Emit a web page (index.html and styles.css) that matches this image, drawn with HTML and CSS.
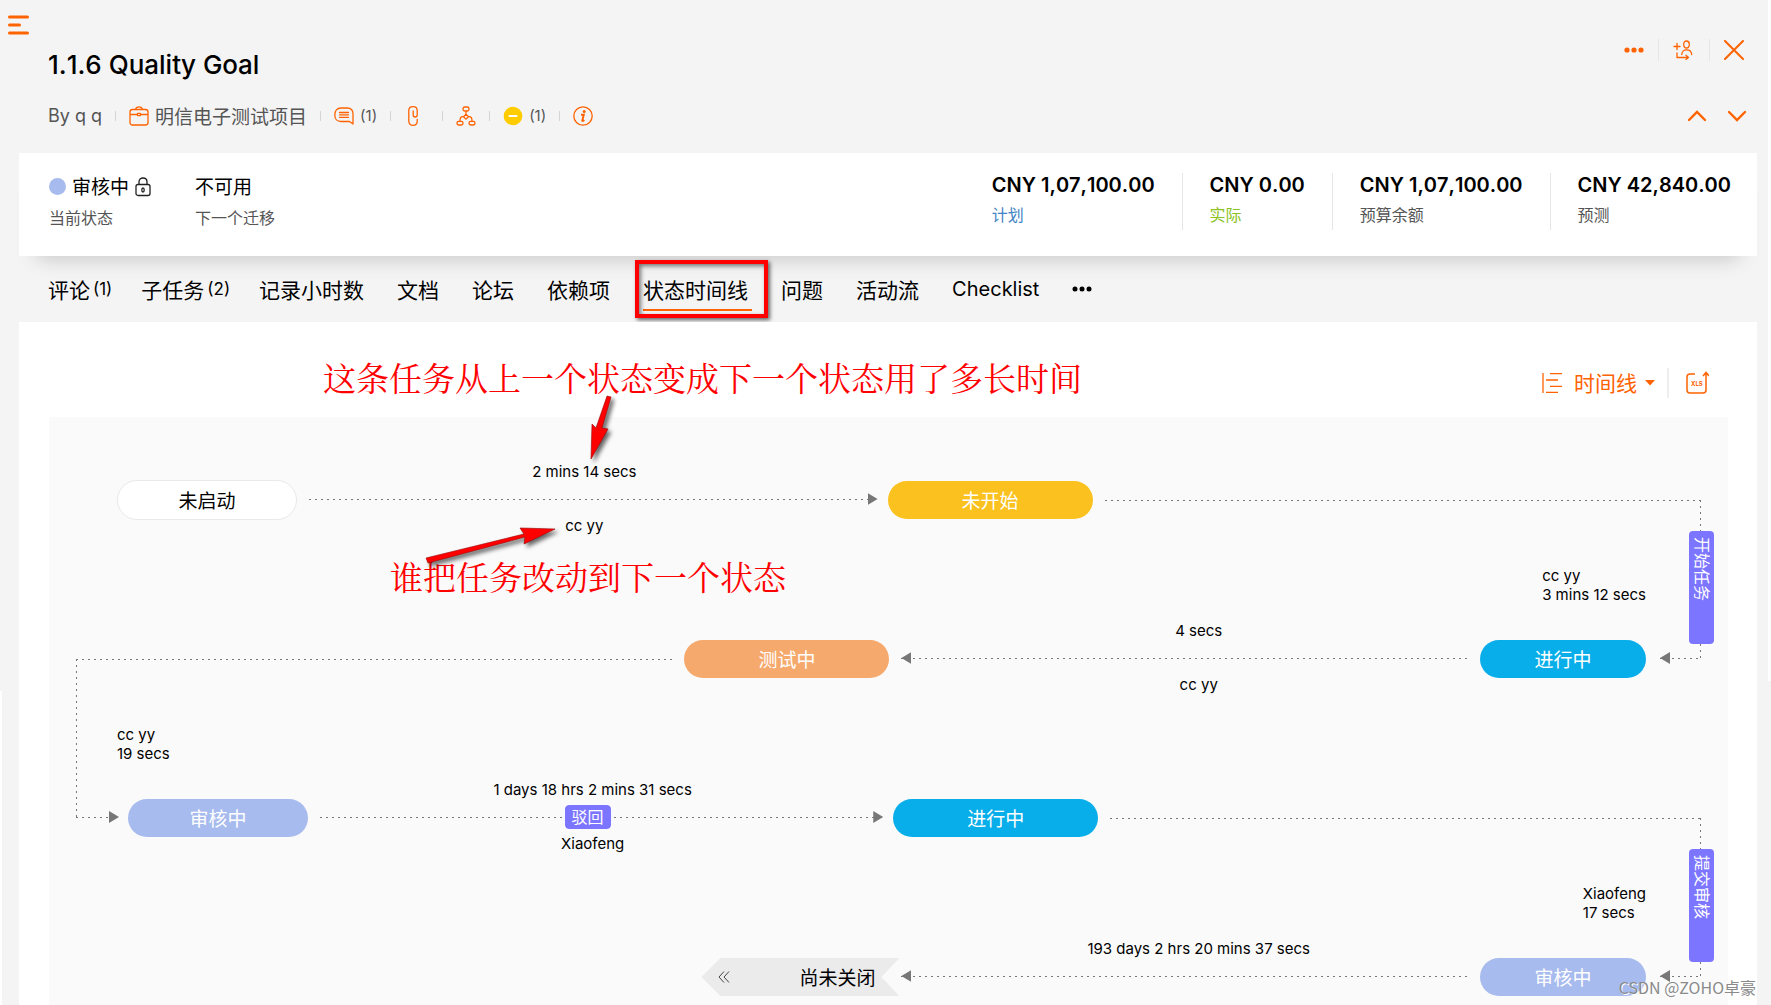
FILE: index.html
```html
<!DOCTYPE html>
<html lang="zh-CN">
<head>
<meta charset="utf-8">
<title>1.1.6 Quality Goal</title>
<link rel="stylesheet" href="styles.css">
</head>
<body>
<div class="app">
  <button class="menu-btn" aria-label="菜单">
    <svg width="21" height="20" viewBox="0 0 21 20"><path d="M1.5 2H19.5M1.5 10H11.5M1.5 18H19.5" stroke="currentColor" stroke-width="3" stroke-linecap="round"/></svg>
  </button>

  <header class="head">
    <div class="head-main">
      <h1 class="title">1.1.6 Quality Goal</h1>
      <div class="meta">
        <span class="meta-by">By q q</span>
        <i class="sep"></i>
        <a class="meta-link project" href="#">
          <svg class="ico" width="20" height="20" viewBox="0 0 20 20" fill="none" stroke="currentColor" stroke-width="1.3"><rect x="1" y="3.5" width="18" height="15.5" rx="2.5"/><path d="M6.5 3.5C7 1.6 8 .8 10 .8s3 .8 3.500 2.700M1 8.500h7.500M11.500 8.500H19"/><rect x="8.500" y="7.300" width="3" height="2.400" rx=".5"/></svg>
          <span>明信电子测试项目</span>
        </a>
        <i class="sep"></i>
        <a class="meta-link" href="#">
          <svg class="ico" width="20" height="20" viewBox="0 0 20 20" fill="none" stroke="currentColor" stroke-width="1.300" stroke-linecap="round" stroke-linejoin="round"><path d="M7 2h6c4 0 6 2.500 6 6v10l-3.500-2.500H7c-4 0-6.200-3-6.200-6.500C.8 4.500 3 2 7 2z"/><path d="M5.500 6.500h9M5.500 8.900h9M5.500 11.300h9"/></svg>
          <span>(1)</span>
        </a>
        <i class="sep"></i>
        <a class="meta-link clip" href="#" aria-label="附件">
          <svg class="ico" width="10" height="20" viewBox="0 0 10 20" fill="none" stroke="currentColor" stroke-width="1.300" stroke-linecap="round"><path d="M9.200 13.500v2c0 2.300-1.700 3.800-4.200 3.800S.8 17.800.8 15.500V4.500C.8 2.200 2.500.7 5 .7s4.200 1.500 4.200 3.800V9c0 1.300-.8 2-2 2s-2-.7-2-2V5"/></svg>
        </a>
        <i class="sep"></i>
        <a class="meta-link" href="#" aria-label="依赖项">
          <svg class="ico" width="20" height="20" viewBox="0 0 20 20" fill="none" stroke="currentColor" stroke-width="1.300"><rect x="7" y="1" width="6" height="4" rx="1.800"/><path d="M10 5v3.200M10 8.200l2.500 2.500L10 13.200l-2.500-2.500zM7.500 10.700C4.500 10.500 4 12 4 15.500M12.500 10.700c3-.2 3.500 1.300 3.500 4.800"/><rect x="1" y="15.300" width="6" height="3.700" rx="1.800"/><rect x="13" y="15.300" width="6" height="3.700" rx="1.800"/></svg>
        </a>
        <i class="sep"></i>
        <a class="meta-link" href="#">
          <svg class="ico" width="20" height="20" viewBox="0 0 20 20"><circle cx="10" cy="10" r="9.300" fill="#fc0"/><path d="M6.500 10h7" stroke="#fff" stroke-width="2" stroke-linecap="round"/></svg>
          <span>(1)</span>
        </a>
        <i class="sep"></i>
        <a class="meta-link" href="#" aria-label="信息">
          <svg class="ico" width="20" height="20" viewBox="0 0 20 20"><circle cx="10" cy="10" r="9.200" fill="none" stroke="currentColor" stroke-width="1.300"/><circle cx="11.200" cy="5.500" r="1.500" fill="currentColor"/><path d="M8 8.800h2.800L9.300 14.500c-.2.900.6.700 2-.5" fill="none" stroke="currentColor" stroke-width="1.900"/></svg>
        </a>
      </div>
    </div>
    <div class="head-side">
      <div class="actions">
        <button aria-label="更多"><svg width="20" height="20" viewBox="0 0 20 20" fill="currentColor"><circle cx="3" cy="10" r="2.600"/><circle cx="10" cy="10" r="2.600"/><circle cx="17" cy="10" r="2.600"/></svg></button>
        <i class="sep tall"></i>
        <button class="follow" aria-label="添加关注者"><svg width="20" height="20" viewBox="0 0 20 20" fill="none" stroke="currentColor" stroke-width="1.300" stroke-linecap="round" stroke-linejoin="round"><path d="M1 6.500h6M4 3.500v6M13.500 1c1.700 0 2.800 1.300 2.800 3.200S15.200 8 13.500 8s-2.800-1.900-2.800-3.800S11.800 1 13.500 1zM8.800 14.500c0-2.800 2-4.700 4.700-4.700 2.900 0 5 1.700 5.200 4.700M4 13v4.500h11.500M13 15.200l2.500 2.300-2.500 2"/></svg></button>
        <i class="sep tall"></i>
        <button aria-label="关闭"><svg width="20" height="20" viewBox="0 0 20 20" fill="none" stroke="currentColor" stroke-width="2" stroke-linecap="round"><path d="M1 1l18 18M19 1L1 19"/></svg></button>
      </div>
      <div class="pager">
        <button aria-label="上一个"><svg width="20" height="12" viewBox="0 0 20 12" fill="none" stroke="currentColor" stroke-width="2.400" stroke-linecap="round"><path d="M2 10l8-8 8 8"/></svg></button>
        <button aria-label="下一个"><svg width="20" height="12" viewBox="0 0 20 12" fill="none" stroke="currentColor" stroke-width="2.400" stroke-linecap="round"><path d="M2 2l8 8 8-8"/></svg></button>
      </div>
    </div>
  </header>

  <section class="summary">
    <div class="state">
      <div class="state-item current">
        <div class="state-value"><i class="dot"></i><span>审核中</span>
          <svg width="16" height="20" viewBox="0 0 16 20" fill="none" stroke="#222" stroke-width="1.300"><rect x="1" y="7.500" width="14" height="11" rx="2"/><path d="M4 7.500V5c0-2.500 1.700-4 4-4s4 1.500 4 4v2.500"/><ellipse cx="8" cy="13" rx="1.200" ry="2"/></svg>
        </div>
        <div class="caption">当前状态</div>
      </div>
      <div class="state-item">
        <div class="state-value"><span>不可用</span></div>
        <div class="caption">下一个迁移</div>
      </div>
    </div>
    <div class="budget">
      <div class="budget-item"><div class="amount">CNY 1,07,100.00</div><div class="caption plan">计划</div></div>
      <div class="budget-item"><div class="amount">CNY 0.00</div><div class="caption actual">实际</div></div>
      <div class="budget-item"><div class="amount">CNY 1,07,100.00</div><div class="caption">预算余额</div></div>
      <div class="budget-item"><div class="amount">CNY 42,840.00</div><div class="caption">预测</div></div>
    </div>
  </section>

  <nav class="tabs">
    <button class="tab counted">评论<span class="count">(1)</span></button>
    <button class="tab counted">子任务<span class="count">(2)</span></button>
    <button class="tab">记录小时数</button>
    <button class="tab">文档</button>
    <button class="tab">论坛</button>
    <button class="tab">依赖项</button>
    <button class="tab active">状态时间线</button>
    <button class="tab">问题</button>
    <button class="tab">活动流</button>
    <button class="tab latin">Checklist</button>
    <button class="tab" aria-label="更多"><svg width="20" height="6" viewBox="0 0 20 6"><circle cx="3" cy="3" r="2.500"/><circle cx="10" cy="3" r="2.500"/><circle cx="17" cy="3" r="2.500"/></svg></button>
  </nav>

  <main class="panel">
    <div class="toolbar">
      <button class="view-btn">
        <svg width="20" height="20" viewBox="0 0 20 20" stroke="currentColor" stroke-width="1.300"><path d="M1 0v20M8 .7h12M4 7h12M8 13.300h12M4 19.300h12"/></svg>
        <span>时间线</span>
        <svg width="10" height="6" viewBox="0 0 10 6"><path d="M0 0h10L5 5.500z" fill="currentColor"/></svg>
      </button>
      <i class="sep bar"></i>
      <button class="xls-btn" aria-label="导出">
        <svg width="24" height="24" viewBox="0 0 24 24" fill="none" stroke="currentColor" stroke-width="1.500"><path d="M10 3H5C3.300 3 2 4 2 6v13c0 2 1 3 3 3h13c2 0 3-1 3-3V2M18 5l3-3.500L24 5"/><text x="6" y="15" class="xls">XLS</text></svg>
      </button>
    </div>

    <div class="canvas">
      <div class="row forward">
        <div class="node plain">未启动</div>
        <div class="link"><span>2 mins 14 secs</span><div class="line"></div><span>cc yy</span></div>
        <div class="node wide yellow">未开始</div>
        <div class="turn turn-right">
          <div class="drop"></div><div class="back"></div>
          <span class="vtag">开始任务</span>
          <p class="note">cc yy<br>3 mins 12 secs</p>
        </div>
      </div>

      <div class="row backward">
        <div class="turn turn-left">
          <div class="drop"></div><div class="back"></div>
          <p class="note">cc yy<br>19 secs</p>
        </div>
        <div class="node wide orange">测试中</div>
        <div class="link reverse"><span>4 secs</span><div class="line"></div><span>cc yy</span></div>
        <div class="node narrow blue">进行中</div>
      </div>

      <div class="row forward inset">
        <div class="node lilac">审核中</div>
        <div class="link"><span>1 days 18 hrs 2 mins 31 secs</span><div class="line"><b class="tag">驳回</b></div><span>Xiaofeng</span></div>
        <div class="node wide blue">进行中</div>
        <div class="turn turn-right">
          <div class="drop"></div><div class="back"></div>
          <span class="vtag">提交审核</span>
          <p class="note">Xiaofeng<br>17 secs</p>
        </div>
      </div>

      <div class="row backward">
        <div class="spacer"></div>
        <div class="open"><svg width="12" height="12" viewBox="0 0 12 12" fill="none" stroke="#444"><path d="M6 .5L1 6l5 5.500M11 .5L6 6l5 5.500"/></svg><span>尚未关闭</span></div>
        <div class="link reverse"><span>193 days 2 hrs 20 mins 37 secs</span><div class="line"></div><span></span></div>
        <div class="node narrow lilac">审核中</div>
      </div>
    </div>

    <p class="remark remark-time">这条任务从上一个状态变成下一个状态用了多长时间</p>
    <p class="remark remark-who">谁把任务改动到下一个状态</p>
    <svg class="pointers" width="220" height="190" viewBox="420 390 220 190">
      <g fill="#f00" stroke="#900" stroke-width=".6"><path d="M607 396l4 1-9 31 6 1-17 30 1-35 4 4z"/><path d="M426 558l98-24-4-6 35 1-31 15 1-7-97 26z"/></g>
    </svg>
  </main>
  <div class="watermark">CSDN @ZOHO卓豪</div>
  <i class="edge edge-left"></i><i class="edge edge-right"></i>
</div>
</body>
</html>
```
FILE: styles.css
```css
* { box-sizing: border-box; }

body {
  margin: 0;
  background: #f4f4f4;
  color: #000;
  font: 400 15px/20px Inter, "Noto Sans CJK SC", sans-serif;
}

h1, p { margin: 0; }
a { color: inherit; text-decoration: none; }
svg { display: block; flex: none; }

button {
  padding: 0;
  border: 0;
  background: none;
  color: inherit;
  font: inherit;
  cursor: pointer;
}

.app {
  position: relative;
  display: flex;
  flex-direction: column;
  height: 100vh;
  overflow: hidden;
}

.menu-btn {
  position: absolute;
  top: 15px;
  left: 8px;
  color: #ff6200;
}

/* header */
.head {
  display: flex;
  flex: none;
  justify-content: space-between;
  height: 153px;
  padding: 39px 23px 0 48px;
}

.title {
  padding-top: 10px;
  font-size: 26px;
  font-weight: 500;
  font-kerning: none;
  line-height: 32px;
}

.meta {
  display: flex;
  align-items: center;
  gap: 13px;
  height: 28px;
  margin-top: 21px;
  color: #555;
  font-size: 15px;
}

.meta-by { font-size: 18px; }
.meta-link { display: flex; align-items: center; gap: 6px; }
.project { font-size: 19px; }
.project span { padding-top: 3px; }
.ico { color: #ff6200; }
.clip { padding: 0 11px 0 4px; }

.sep {
  flex: none;
  width: 1px;
  height: 10px;
  background: #d5d5d5;
}

.sep.tall { height: 22px; background: #e6e6e6; }
.sep.bar { width: 2px; height: 30px; background: #eee; }

.head-side {
  display: flex;
  flex-direction: column;
  align-items: flex-end;
  gap: 49px;
  color: #ff6200;
}

.actions { display: flex; align-items: center; gap: 14px; padding-right: 4px; }
.follow { padding-right: 2px; }
.pager { display: flex; gap: 20px; padding-right: 1px; }

/* summary card */
.summary {
  position: relative;
  display: flex;
  flex: none;
  justify-content: space-between;
  height: 103px;
  margin: 0 14px 0 19px;
  padding: 20px 26px 0 30px;
  background: #fff;
  box-shadow: 0 20px 20px -18px rgba(0, 0, 0, .2);
}

.state { display: flex; }
.state-item.current { width: 146px; }

.state-value {
  display: flex;
  align-items: center;
  gap: 6px;
  height: 27px;
  font-size: 19px;
}

.state-value span { padding-top: 3px; }

.dot {
  width: 17px;
  height: 17px;
  border-radius: 50%;
  background: #a7bbee;
}

.caption { margin-top: 8px; color: #555; font-size: 16px; }
.plan { color: #4285c4; }
.actual { color: #8cc224; }

.budget { display: flex; height: 57px; }
.budget-item { padding: 0 27px; border-right: 1px solid #e6e6e6; }
.budget-item:last-child { padding-right: 0; border: 0; }
.amount { font-size: 20px; font-weight: 600; font-kerning: none; line-height: 24px; }

/* tabs */
.tabs {
  display: flex;
  flex: none;
  align-items: center;
  gap: 29px;
  height: 66px;
  padding-left: 48px;
}

.tab {
  position: relative;
  height: 44px;
  padding-right: 4px;
  font-size: 21px;
  line-height: 47px;
  white-space: nowrap;
}

.counted { display: flex; gap: 3px; padding: 0; }
.count { font-size: 17px; line-height: 44px; }
.latin { font-size: 20px; line-height: 44px; }

.active::before {
  content: "";
  position: absolute;
  right: 0;
  bottom: 0;
  left: 0;
  height: 2px;
  background: #ff6200;
}

.active::after {
  content: "";
  position: absolute;
  inset: -7px -16px -7px -8px;
  border: 4px solid #f00;
  box-shadow: 2px 2px 4px rgba(0, 0, 0, .6), inset 2px 2px 4px rgba(0, 0, 0, .5);
}

/* timeline panel */
.panel {
  position: relative;
  flex: 1;
  min-height: 0;
  margin: 0 14px 0 19px;
  padding: 0 29px 0 30px;
  background: #fff;
}

.toolbar {
  display: flex;
  align-items: center;
  justify-content: flex-end;
  gap: 12px;
  height: 95px;
  padding: 26px 19px 0 0;
  color: #ff6200;
}

.view-btn {
  display: flex;
  align-items: center;
  gap: 8px;
  font-size: 21px;
}

.view-btn span { padding: 2px 0 0 4px; }
.xls-btn { padding-left: 4px; }

.xls {
  fill: currentColor;
  stroke: none;
  font: 700 6px Inter, sans-serif;
}

.canvas {
  display: flex;
  flex-direction: column;
  gap: 83px;
  padding-top: 45px;
  background: #fafafa;
}

.row { display: flex; align-items: center; gap: 12px; height: 76px; }
.forward { padding: 0 27px 0 68px; }
.inset { padding-left: 79px; }
.backward { padding: 0 82px 0 27px; }

.node {
  flex: none;
  width: 180px;
  height: 38px;
  border-radius: 19px;
  color: #fff;
  font-size: 19px;
  line-height: 41px;
  text-align: center;
}

.wide { width: 205px; }
.narrow { width: 166px; }

.plain {
  height: 40px;
  border: 1px solid #e9e9e9;
  border-radius: 20px;
  background: #fff;
  color: #000;
}

.yellow { background: #fbc11e; }
.orange { background: #f6a96d; }
.blue { background: #08aeea; }
.lilac { background: #a7bbee; }

.link {
  display: flex;
  flex: 19 1 0;
  flex-direction: column;
  height: 76px;
  text-align: center;
}

.link > span { height: 20px; padding-right: 16px; }
.reverse > span { padding: 0 0 0 28px; }

.line {
  position: relative;
  display: flex;
  align-items: center;
  justify-content: center;
  height: 34px;
  padding-right: 26px;
  background: repeating-linear-gradient(90deg, #777 0 2px, transparent 2px 6px) center / 100% 1px no-repeat;
}

.line::after,
.back::after {
  content: "";
  position: absolute;
  top: 50%;
  right: -2px;
  width: 10px;
  height: 12px;
  margin-top: -6px;
  background: #777;
  clip-path: polygon(0 0, 100% 50%, 0 100%);
}

.reverse .line::after,
.turn-right .back::after {
  right: auto;
  left: 0;
  clip-path: polygon(100% 0, 0 50%, 100% 100%);
}

.tag,
.vtag {
  border-radius: 4px;
  background: #7c75ff;
  color: #fff;
  font-size: 16px;
  font-weight: 400;
}

.tag {
  padding: 0 7px;
  outline: 2px solid #fafafa;
  line-height: 24px;
}

/* connectors that wrap from one row to the next */
.turn {
  position: relative;
  flex: 20 1 0;
  height: 1px;
  background: repeating-linear-gradient(90deg, #777 0 2px, transparent 2px 6px);
}

.drop {
  position: absolute;
  top: 0;
  right: 0;
  width: 1px;
  height: 158px;
  background: repeating-linear-gradient(#777 0 2px, transparent 2px 6px);
}

.back {
  position: absolute;
  top: 158px;
  right: 0;
  width: 41px;
  height: 1px;
  background: repeating-linear-gradient(90deg, #777 0 2px, transparent 2px 6px);
}

.turn-left .drop,
.turn-left .back { right: auto; left: 0; }

.vtag {
  position: absolute;
  top: 31px;
  right: -13px;
  width: 25px;
  height: 113px;
  padding-top: 6px;
  line-height: 25px;
  writing-mode: vertical-rl;
  text-orientation: sideways;
}

.note {
  position: absolute;
  top: 66px;
  right: 55px;
  line-height: 19px;
  white-space: nowrap;
}

.turn-left .note { right: auto; left: 41px; }

.spacer { flex: 20 1 0; }

.open {
  display: flex;
  flex: none;
  align-items: center;
  justify-content: space-between;
  width: 198px;
  height: 38px;
  margin: 0 -10px 0 17px;
  padding: 0 24px 0 17px;
  background: #ebebeb;
  clip-path: polygon(19px 0, 100% 0, calc(100% - 18px) 50%, 100% 100%, 19px 100%, 0 50%);
  font-size: 19px;
}

.open span { padding-top: 4px; }

/* remarks drawn over the timeline */
.remark {
  position: absolute;
  color: #f00;
  font: 33px/40px "Noto Serif CJK SC", "AR PL UMing CN", "Noto Sans CJK SC", serif;
  white-space: nowrap;
}

.remark-time { top: 35px; left: 304px; }
.remark-who { top: 234px; left: 371px; }

.pointers {
  position: absolute;
  top: 68px;
  left: 401px;
  filter: drop-shadow(3px 3px 2px rgba(0, 0, 0, .6));
}

.watermark {
  position: absolute;
  right: 15px;
  bottom: 8px;
  color: #8a8a8a;
  font-family: "Noto Sans CJK SC", sans-serif;
  font-size: 16px;
  text-shadow: 1px 1px 0 #fff;
}

.edge { position: absolute; width: 3px; background: #fff; }
.edge-left { top: 691px; bottom: 0; left: 0; width: 2px; }
.edge-right { top: 0; right: 0; height: 681px; }
```
